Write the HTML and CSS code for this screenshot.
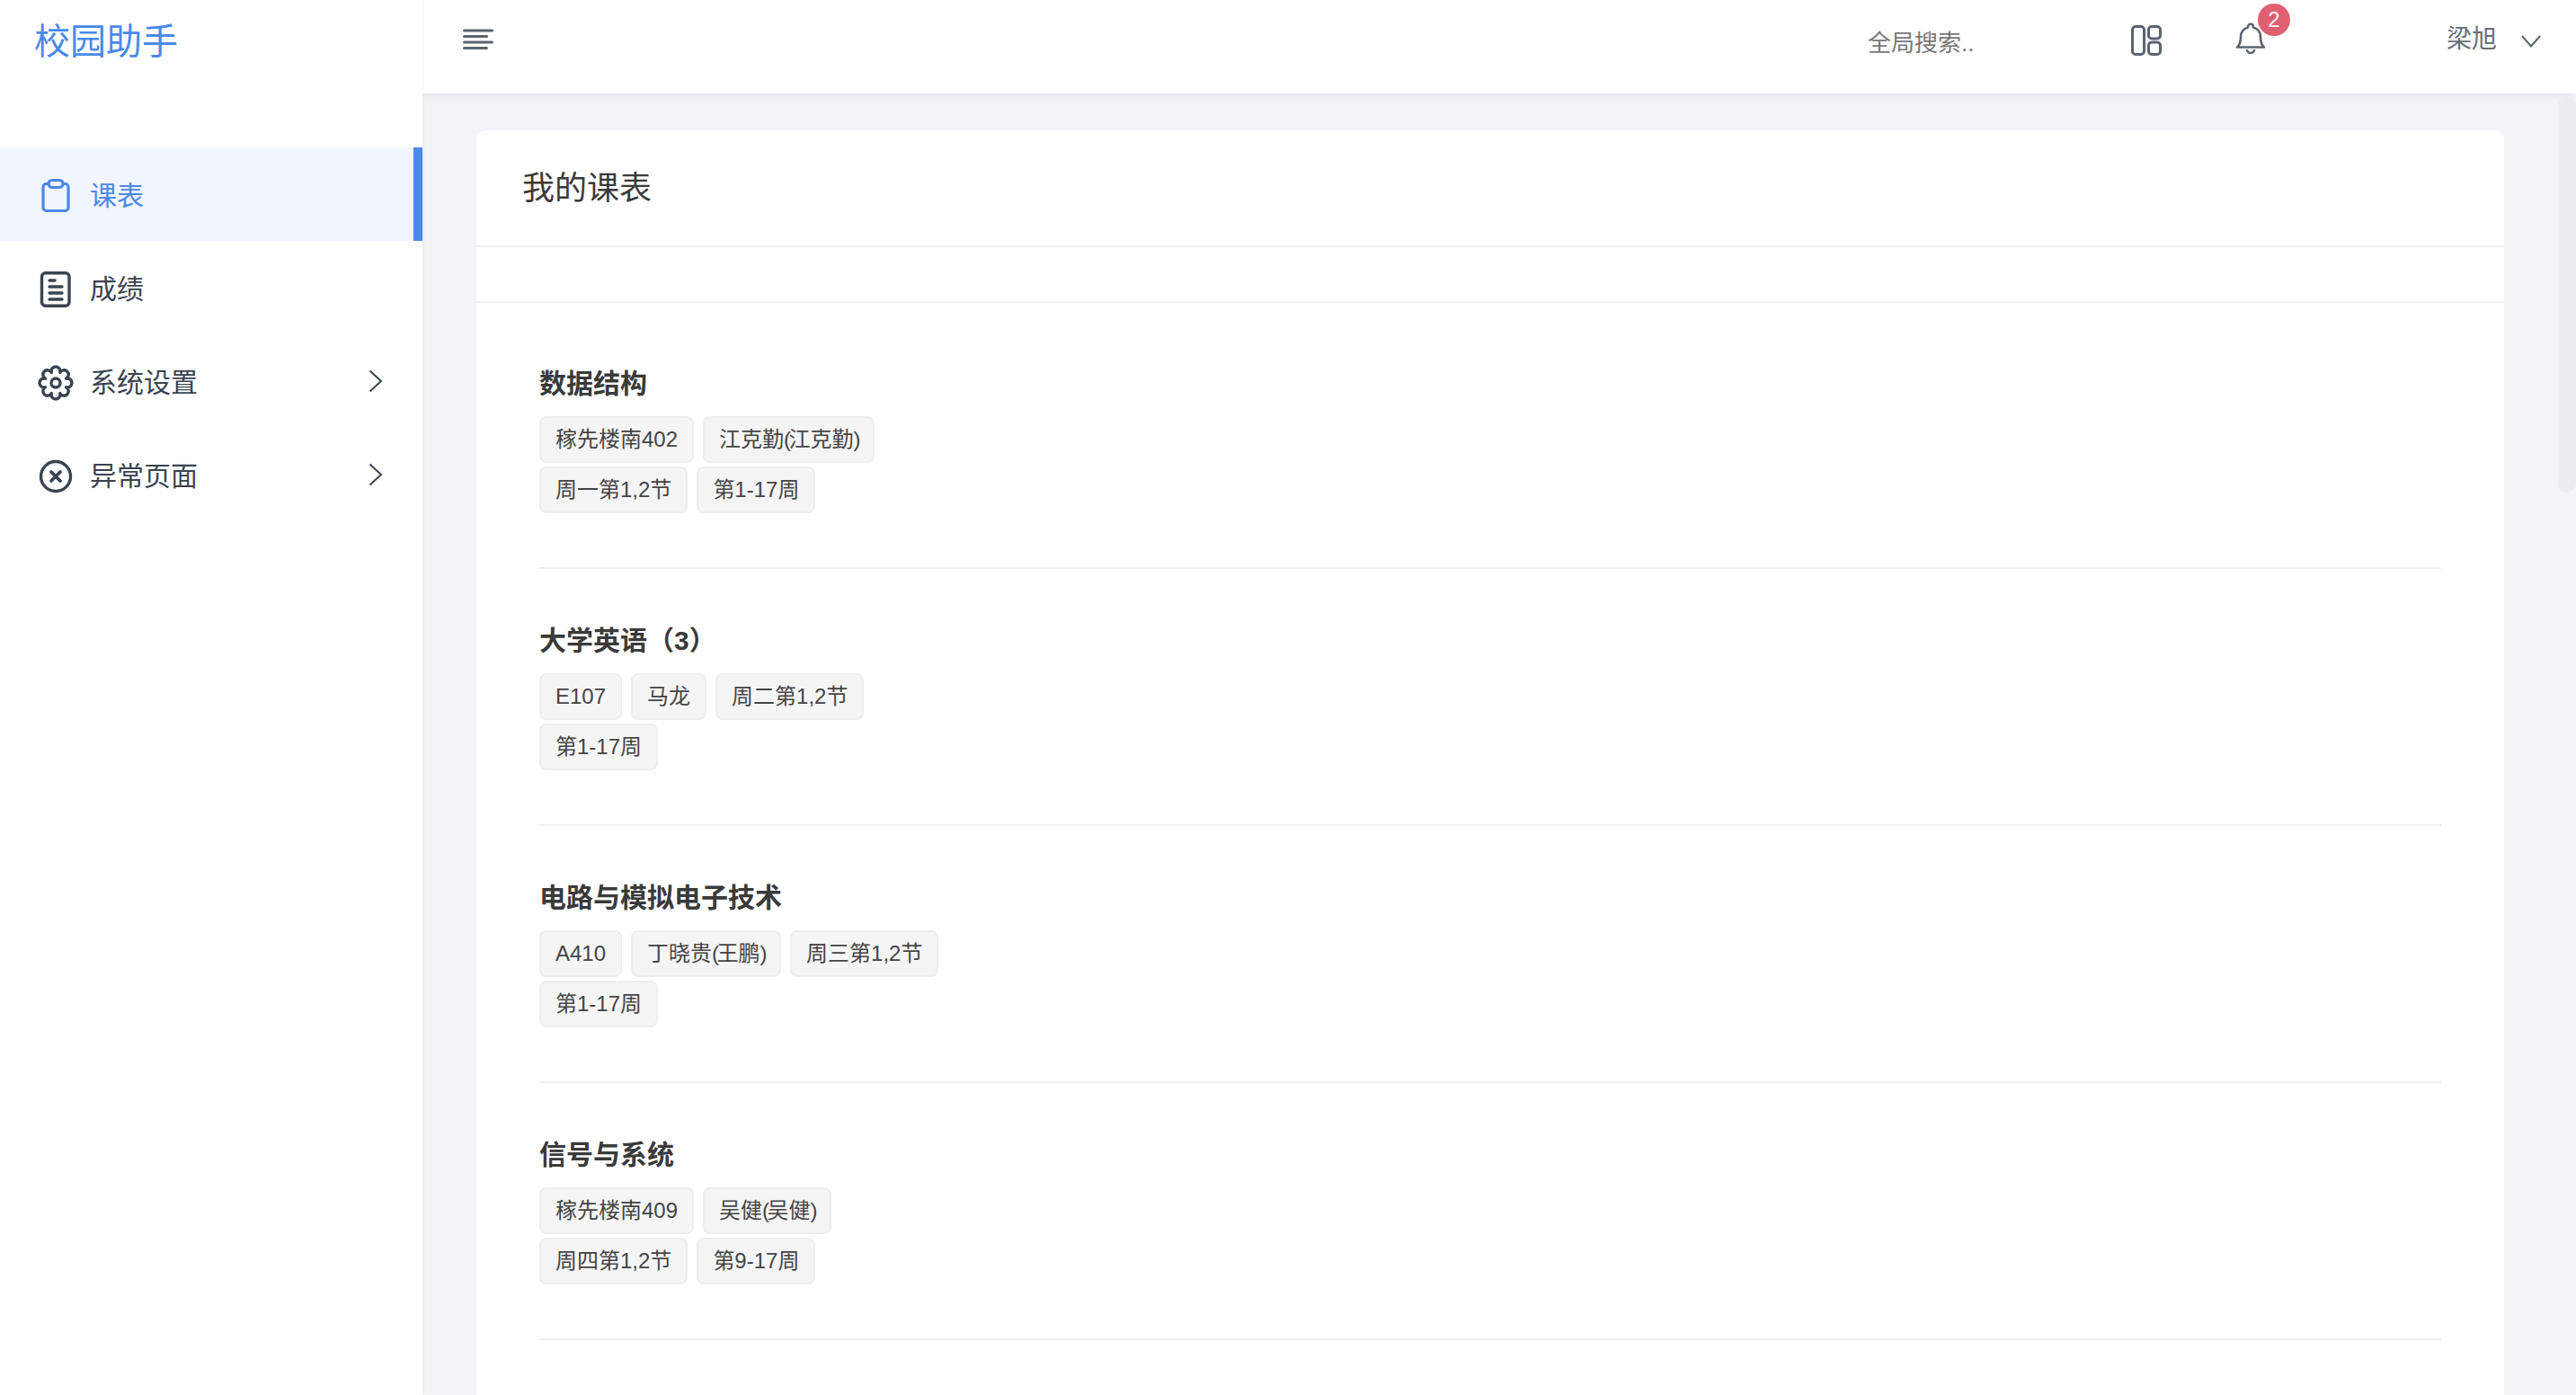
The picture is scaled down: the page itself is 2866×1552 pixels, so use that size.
FILE: index.html
```html
<!DOCTYPE html>
<html lang="zh-CN">
<head>
<meta charset="utf-8">
<title>校园助手</title>
<link rel="stylesheet" href="styles.css">
</head>
<body>
<div class="app">
  <aside class="sidebar">
    <div class="logo">校园助手</div>
    <nav class="menu">
      <a class="menu-item active">
        <svg class="menu-icon" viewBox="0 0 40 40" fill="none" stroke="currentColor" stroke-width="3.2" stroke-linejoin="round"><path d="M12 6.500H9.500A3.500 3.500 0 0 0 6 10V33a3.500 3.500 0 0 0 3.500 3.500h21A3.500 3.500 0 0 0 34 33V10A3.500 3.500 0 0 0 30.500 6.500H28"/><rect x="12" y="2.500" width="16" height="8" rx="4"/></svg>
        <span class="menu-label">课表</span>
      </a>
      <a class="menu-item">
        <svg class="menu-icon" viewBox="0 0 40 40" fill="none" stroke="currentColor" stroke-width="3.400" stroke-linecap="round"><rect x="4.500" y="1.700" width="30.500" height="36.600" rx="4"/><path d="M13 10h6M13 17h14M13 24h14M13 31h14"/></svg>
        <span class="menu-label">成绩</span>
      </a>
      <a class="menu-item">
        <svg class="menu-icon" viewBox="-20 -20 40 40" fill="none" stroke="currentColor" stroke-width="3.400" stroke-linejoin="round"><path d="M11.550 -4.780A5 5 0 1 1 11.550 4.780A5 5 0 1 1 4.780 11.550A5 5 0 1 1 -4.780 11.550A5 5 0 1 1 -11.550 4.780A5 5 0 1 1 -11.550 -4.780A5 5 0 1 1 -4.780 -11.550A5 5 0 1 1 4.780 -11.550A5 5 0 1 1 11.550 -4.780Z"/><circle r="5"/></svg>
        <span class="menu-label">系统设置</span>
        <svg class="menu-arrow" viewBox="0 0 16 26" fill="none" stroke="currentColor" stroke-width="2"><path d="M1.500 1.500L14 13L1.500 24.500"/></svg>
      </a>
      <a class="menu-item">
        <svg class="menu-icon" viewBox="0 0 40 40" fill="none" stroke="currentColor" stroke-width="3.400" stroke-linecap="round"><circle cx="20" cy="20" r="16.500"/><path d="M15 15l10 10M25 15l-10 10" stroke-width="3.800"/></svg>
        <span class="menu-label">异常页面</span>
        <svg class="menu-arrow" viewBox="0 0 16 26" fill="none" stroke="currentColor" stroke-width="2"><path d="M1.500 1.500L14 13L1.500 24.500"/></svg>
      </a>
    </nav>
  </aside>
  <div class="main">
    <header class="topbar">
      <svg class="burger" viewBox="0 0 34 24" fill="none" stroke="currentColor" stroke-width="3" stroke-linecap="round"><path d="M1.500 2h31M1.500 8.500h25M1.500 15h31M1.500 21.500h25"/></svg>
      <span class="search">全局搜索..</span>
      <svg class="layout-icon" viewBox="0 0 34 34" fill="none" stroke="currentColor" stroke-width="3"><rect x="1.500" y="1.500" width="13" height="31" rx="3.500"/><rect x="19.500" y="1.500" width="13" height="13.500" rx="3.500"/><rect x="19.500" y="19" width="13" height="13.500" rx="3.500"/></svg>
      <div class="bell">
        <svg class="bell-icon" viewBox="0 0 34 36" fill="none" stroke="currentColor" stroke-width="2.600" stroke-linejoin="round"><path d="M2 28.500C5 26 6 22 6 17C6 11 10 7.500 14 6.500C14 1.500 20 1.500 20 6.500C24 7.500 28 11 28 17C28 22 29 26 32 28.500Z"/><path d="M13 31a4 4 0 0 0 8 0"/></svg>
        <span class="badge">2</span>
      </div>
      <span class="user">梁旭</span>
      <svg class="user-arrow" viewBox="0 0 22 14" fill="none" stroke="currentColor" stroke-width="2"><path d="M1 1L11 12.500L21 1"/></svg>
    </header>
    <main class="content">
      <section class="card">
        <div class="card-head">我的课表</div>
        <div class="card-strip"></div>
        <div class="card-body">
          <article class="course">
            <h3 class="course-name">数据结构</h3>
            <div class="tags"><span class="tag">稼先楼南402</span><span class="tag">江克勤<i class="paren">(</i>江克勤<i class="paren">)</i></span><span class="tag">周一第1,2节</span><span class="tag">第1-17周</span></div>
          </article>
          <article class="course">
            <h3 class="course-name">大学英语（3）</h3>
            <div class="tags"><span class="tag">E107</span><span class="tag">马龙</span><span class="tag">周二第1,2节</span><span class="tag">第1-17周</span></div>
          </article>
          <article class="course">
            <h3 class="course-name">电路与模拟电子技术</h3>
            <div class="tags"><span class="tag">A410</span><span class="tag">丁晓贵<i class="paren">(</i>王鹏<i class="paren">)</i></span><span class="tag">周三第1,2节</span><span class="tag">第1-17周</span></div>
          </article>
          <article class="course">
            <h3 class="course-name">信号与系统</h3>
            <div class="tags"><span class="tag">稼先楼南409</span><span class="tag">吴健<i class="paren">(</i>吴健<i class="paren">)</i></span><span class="tag">周四第1,2节</span><span class="tag">第9-17周</span></div>
          </article>
        </div>
      </section>
    </main>
    <div class="scroll-thumb"></div>
  </div>
</div>
</body>
</html>
```
FILE: styles.css
```css
* { box-sizing: border-box; }
html, body { margin: 0; height: 100%; overflow: hidden; }
body {
  font-family: "Liberation Sans", "Noto Sans CJK SC", sans-serif;
  color: #3a4350;
  background: #f3f4f7;
}
.app { display: flex; height: 1552px; }

.sidebar { flex: 0 0 470px; background: #fff; box-shadow: 1px 0 3px rgba(40, 50, 70, .06); position: relative; z-index: 2; }
.logo { height: 164px; padding: 23px 0 0 38px; font-size: 40px; line-height: 46px; color: #4a89e8; }
.menu { display: flex; flex-direction: column; }
.menu-item { display: flex; align-items: center; height: 104px; padding-left: 42px; padding-right: 44px; font-size: 30px; color: #3a4350; }
.menu-icon { flex: 0 0 40px; width: 40px; height: 40px; margin-top: 4px; }
.menu-label { margin: 4px 0 0 18px; flex: 1; line-height: 40px; }
.menu-arrow { flex: 0 0 16px; width: 16px; height: 26px; }
.menu-item.active { background: #f0f5fe; color: #4a89e8; border-right: 10px solid #4a89e8; }

.main { flex: 1; min-width: 0; display: flex; flex-direction: column; position: relative; }
.topbar {
  flex: 0 0 104px; display: flex; align-items: flex-start; background: #fff;
  box-shadow: 0 2px 8px rgba(40, 50, 70, .09); position: relative; z-index: 1;
  color: #5b6470;
}
.burger { width: 34px; height: 24px; margin: 32px 0 0 45px; }
.search { margin: 30px 0 0 1529px; width: 118px; font-size: 26px; line-height: 36px; color: #777; white-space: nowrap; }
.layout-icon { width: 34px; height: 34px; margin: 28px 0 0 175px; }
.bell { position: relative; width: 34px; height: 36px; margin: 24px 0 0 82px; }
.bell-icon { width: 34px; height: 36px; display: block; }
.badge {
  position: absolute; left: 25px; top: -20px; width: 36px; height: 36px; border-radius: 50%;
  background: #e06070; color: #fff; font-size: 24px; line-height: 36px; text-align: center;
}
.user { margin: 26px 0 0 201px; font-size: 28px; line-height: 36px; color: #666e78; white-space: nowrap; }
.user-arrow { width: 22px; height: 14px; margin: 39px 0 0 27px; }

.content { flex: 1; min-height: 0; overflow: hidden; padding: 41px 80px 0 60px; }
.card { background: #fff; border-radius: 10px 10px 0 0; min-height: 100%; }
.card-head { height: 130px; padding: 45px 0 0 51px; font-size: 36px; line-height: 40px; color: #3a3a3a; border-bottom: 2px solid #eef0f2; }
.card-strip { height: 62px; border-bottom: 2px solid #eef0f2; }
.card-body { padding: 10px 70px 0; }
.course { padding: 60px 0 60px; border-bottom: 2px solid #eef0f2; }
.course-name { margin: 0 0 16px; font-size: 30px; line-height: 40px; font-weight: 700; color: #3a3a3a; }
.tags { display: flex; flex-wrap: wrap; gap: 4px 10px; width: 460px; }
.tag {
  height: 52px; padding: 0 16px; line-height: 48px; font-size: 24px; color: #444;
  background: #f5f5f5; border: 2px solid #eeeeee; border-radius: 8px; white-space: nowrap;
}
.paren { font-style: normal; letter-spacing: -2.5px; }
.scroll-thumb { position: absolute; right: 0; top: 108px; width: 20px; height: 440px; background: #ecedef; border-radius: 10px; z-index: 1; }
```
